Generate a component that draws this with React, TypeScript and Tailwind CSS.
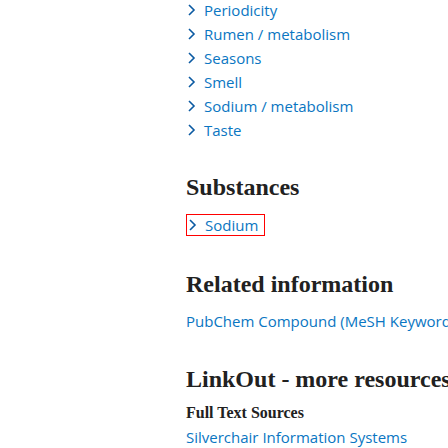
function Chevron() {
  return (
    <svg width="9" height="12" viewBox="0 0 9 12" className="inline-block shrink-0 mr-[8px] ml-[1px]">
      <path d="M2 1 L7 6 L2 11" fill="none" stroke="#0b5aa2" strokeWidth="1.6" />
    </svg>
  );
}

const terms = ["Periodicity", "Rumen / metabolism", "Seasons", "Smell", "Sodium / metabolism", "Taste"];

const sans = "font-['Open_Sans',sans-serif]";
const serif = "font-['Liberation_Serif',serif]";

export default function App() {
  return (
    <div className="w-[448px] h-[448px] overflow-hidden bg-white pl-[186px]">
      {/* mesh terms */}
      <ul className={`${sans} text-[15px] leading-6 text-[#0a76c2] -mt-[2px] whitespace-nowrap`}>
        {terms.map((t) => (
          <li key={t} className="flex items-center">
            <Chevron />
            {t}
          </li>
        ))}
      </ul>

      {/* substances */}
      <h2 className={`${serif} font-bold text-[24px] leading-8 text-[#212121] mt-[29px]`}>Substances</h2>
      <div className="mt-[11px] flex">
        <div className={`${sans} text-[15px] leading-5 text-[#0a76c2] border border-[#ff0000] flex items-center pr-[6px]`}>
          <Chevron />
          Sodium
        </div>
      </div>

      {/* related information */}
      <h2 className={`${serif} font-bold text-[24px] leading-8 text-[#212121] mt-[32px]`}>Related information</h2>
      <p className={`${sans} text-[15px] leading-6 text-[#0a76c2] mt-[9px] whitespace-nowrap`}>
        PubChem Compound (MeSH Keyword)
      </p>

      {/* linkout */}
      <h2 className={`${serif} font-bold text-[24px] leading-8 text-[#212121] mt-[30px] whitespace-nowrap`}>
        LinkOut - more resources
      </h2>
      <h3 className={`${serif} font-bold text-[16px] leading-6 text-[#212121] mt-[6px]`}>Full Text Sources</h3>
      <p className={`${sans} text-[15px] leading-6 text-[#0a76c2] whitespace-nowrap`}>
        Silverchair Information Systems
      </p>
    </div>
  );
}
